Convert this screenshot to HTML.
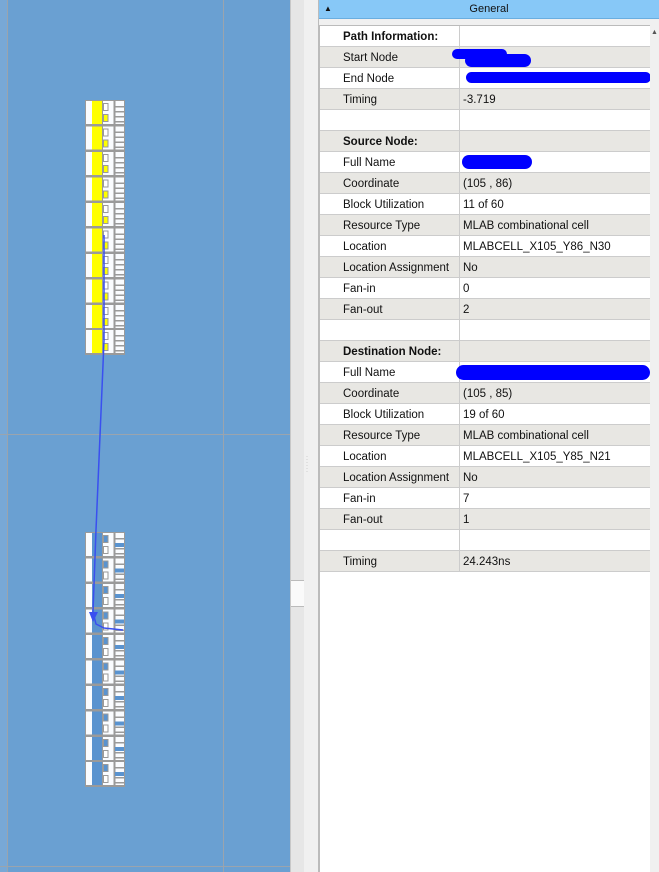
<!DOCTYPE html>
<html><head><meta charset="utf-8"><style>
*{margin:0;padding:0;box-sizing:border-box}
body{width:659px;height:872px;overflow:hidden;background:#f0f0f0;position:relative;font-family:"Liberation Sans",sans-serif;font-size:11.5px;color:#111}
#left{position:absolute;left:0;top:0;width:290px;height:872px}
#div1{position:absolute;left:290px;top:0;width:14px;height:872px;background:#e6e6e6;border-left:1px solid #c8c8c8}
#div2{position:absolute;left:304px;top:0;width:15px;height:872px;background:#f0f0f0;border-right:1px solid #bbb}
#hdr{position:absolute;left:319px;top:0;width:340px;height:19px;background:#87c8f7;border-bottom:1px solid #6aaee0;text-align:center;line-height:19px;font-size:11px}
#hdr span.a{position:absolute;left:5px;top:-1px;font-size:8px}
#tbl{position:absolute;left:319px;top:25px;width:331px;height:847px;background:#fff;border-left:1px solid #bbb;border-top:1px solid #bbb}
.r{position:absolute;left:0;width:331px;height:21px;border-bottom:1px solid #ccc;line-height:22px}
.r.g{background:#e8e7e3}
.r .k{position:absolute;left:23px}
.r .v{position:absolute;left:143px}
.r .s{position:absolute;left:139px;top:0;height:21px;border-left:1px solid #ccc}
.b{font-weight:bold}
#sb{position:absolute;left:650px;top:25px;width:9px;height:847px;background:#f0f0f0}
</style></head><body>
<svg id="left" width="290" height="872" viewBox="0 0 290 872">
<defs>
<g id="by">
<rect x="0" y="0" width="40" height="26" fill="#9a9a9a"/>
<rect x="1" y="1" width="38" height="23" fill="#fafcff"/>
<rect x="7" y="1" width="10" height="23" fill="#ffff00"/>
<rect x="17" y="1" width="1" height="23" fill="#9a9a9a"/>
<rect x="18.5" y="3.5" width="4.5" height="7" fill="#fff" stroke="#9a9a9a"/>
<rect x="18.5" y="14.5" width="4.5" height="7" fill="#ffff00" stroke="#9a9a9a"/>
<rect x="28.5" y="1" width="2" height="23" fill="#9a9a9a"/>
<rect x="30" y="6" width="9" height="1.5" fill="#9a9a9a"/>
<rect x="30" y="11" width="9" height="1.5" fill="#9a9a9a"/>
<rect x="30" y="16" width="9" height="1.5" fill="#9a9a9a"/>
<rect x="30" y="21" width="9" height="1.5" fill="#9a9a9a"/>
</g>
<g id="bb">
<rect x="0" y="0" width="40" height="26" fill="#9a9a9a"/>
<rect x="1" y="1" width="38" height="23" fill="#fafcff"/>
<rect x="7" y="1" width="10" height="23" fill="#5a93cf"/>
<rect x="17" y="1" width="1" height="23" fill="#9a9a9a"/>
<rect x="18.5" y="3.5" width="4.5" height="7" fill="#5a93cf" stroke="#9a9a9a"/>
<rect x="18.5" y="14.5" width="4.5" height="7" fill="#fff" stroke="#9a9a9a"/>
<rect x="28.5" y="1" width="2" height="23" fill="#9a9a9a"/>
<rect x="30" y="6" width="9" height="1.5" fill="#9a9a9a"/>
<rect x="30" y="11" width="9" height="4" fill="#5a93cf"/>
<rect x="30" y="16" width="9" height="1.5" fill="#9a9a9a"/>
<rect x="30" y="21" width="9" height="1.5" fill="#9a9a9a"/>
</g>
</defs>
<rect width="290" height="872" fill="#6aa0d2"/>
<rect width="7" height="872" fill="#78a8d6"/>
<rect x="7" y="0" width="1" height="872" fill="#9aa4ae"/>
<rect x="223" y="0" width="1" height="872" fill="#9aa4ae"/>
<rect x="0" y="434" width="290" height="1" fill="#9aa4ae"/>
<rect x="0" y="866" width="290" height="1" fill="#9aa4ae"/>
<use href="#by" x="85" y="100"/><use href="#by" x="85" y="125.5"/><use href="#by" x="85" y="151"/><use href="#by" x="85" y="176.5"/><use href="#by" x="85" y="202"/><use href="#by" x="85" y="227.5"/><use href="#by" x="85" y="253"/><use href="#by" x="85" y="278.5"/><use href="#by" x="85" y="304"/><use href="#by" x="85" y="329"/>
<use href="#bb" x="85" y="532"/><use href="#bb" x="85" y="557.5"/><use href="#bb" x="85" y="583"/><use href="#bb" x="85" y="608.5"/><use href="#bb" x="85" y="634"/><use href="#bb" x="85" y="659.5"/><use href="#bb" x="85" y="685"/><use href="#bb" x="85" y="710.5"/><use href="#bb" x="85" y="736"/><use href="#bb" x="85" y="761"/>
<path d="M104 235 L104 340 L103 365 L96 530 L93 612 L96 624 L104 628 L123 630" fill="none" stroke="#3a4ff0" stroke-width="1.5"/>
<path d="M89 612 L98 612 L93 622 Z" fill="#3a4ff0"/>
</svg>
<div id="div1"><div style="position:absolute;left:0;top:580px;width:14px;height:27px;background:#fafafa;border:1px solid #bbb;border-left:none"></div></div>
<div id="div2"><div style="position:absolute;left:2px;top:456px;color:#999;font-size:6px;line-height:3px">·<br>·<br>·<br>·<br>·<br>·</div></div>
<div id="hdr"><span class="a">▲</span>General</div>
<div id="tbl">
<div class="r" style="top:0"><span class="k b">Path Information:</span><span class="s"></span></div>
<div class="r g" style="top:21px"><span class="k">Start Node</span><span class="s"></span><span style="position:absolute;left:132px;top:2px;width:55px;height:10px;background:#0000ff;border-radius:6px"></span><span style="position:absolute;left:145px;top:7px;width:66px;height:13px;background:#0000ff;border-radius:7px"></span></div>
<div class="r" style="top:42px"><span class="k">End Node</span><span class="s"></span><span style="position:absolute;left:146px;top:4px;width:185px;height:11px;background:#0000ff;border-radius:6px"></span></div>
<div class="r g" style="top:63px"><span class="k">Timing</span><span class="s"></span><span class="v">-3.719</span></div>
<div class="r" style="top:84px"><span class="s"></span></div>
<div class="r g" style="top:105px"><span class="k b">Source Node:</span><span class="s"></span></div>
<div class="r" style="top:126px"><span class="k">Full Name</span><span class="s"></span><span style="position:absolute;left:142px;top:3px;width:70px;height:14px;background:#0000ff;border-radius:7px"></span></div>
<div class="r g" style="top:147px"><span class="k">Coordinate</span><span class="s"></span><span class="v">(105 , 86)</span></div>
<div class="r" style="top:168px"><span class="k">Block Utilization</span><span class="s"></span><span class="v">11 of 60</span></div>
<div class="r g" style="top:189px"><span class="k">Resource Type</span><span class="s"></span><span class="v">MLAB combinational cell</span></div>
<div class="r" style="top:210px"><span class="k">Location</span><span class="s"></span><span class="v">MLABCELL_X105_Y86_N30</span></div>
<div class="r g" style="top:231px"><span class="k">Location Assignment</span><span class="s"></span><span class="v">No</span></div>
<div class="r" style="top:252px"><span class="k">Fan-in</span><span class="s"></span><span class="v">0</span></div>
<div class="r g" style="top:273px"><span class="k">Fan-out</span><span class="s"></span><span class="v">2</span></div>
<div class="r" style="top:294px"><span class="s"></span></div>
<div class="r g" style="top:315px"><span class="k b">Destination Node:</span><span class="s"></span></div>
<div class="r" style="top:336px"><span class="k">Full Name</span><span class="s"></span><span style="position:absolute;left:136px;top:3px;width:194px;height:15px;background:#0000ff;border-radius:8px"></span></div>
<div class="r g" style="top:357px"><span class="k">Coordinate</span><span class="s"></span><span class="v">(105 , 85)</span></div>
<div class="r" style="top:378px"><span class="k">Block Utilization</span><span class="s"></span><span class="v">19 of 60</span></div>
<div class="r g" style="top:399px"><span class="k">Resource Type</span><span class="s"></span><span class="v">MLAB combinational cell</span></div>
<div class="r" style="top:420px"><span class="k">Location</span><span class="s"></span><span class="v">MLABCELL_X105_Y85_N21</span></div>
<div class="r g" style="top:441px"><span class="k">Location Assignment</span><span class="s"></span><span class="v">No</span></div>
<div class="r" style="top:462px"><span class="k">Fan-in</span><span class="s"></span><span class="v">7</span></div>
<div class="r g" style="top:483px"><span class="k">Fan-out</span><span class="s"></span><span class="v">1</span></div>
<div class="r" style="top:504px"><span class="s"></span></div>
<div class="r g" style="top:525px"><span class="k">Timing</span><span class="s"></span><span class="v">24.243ns</span></div>
</div>
<div id="sb"><span style="position:absolute;left:1px;top:4px;font-size:7px;color:#555">▲</span></div>
</body></html>
